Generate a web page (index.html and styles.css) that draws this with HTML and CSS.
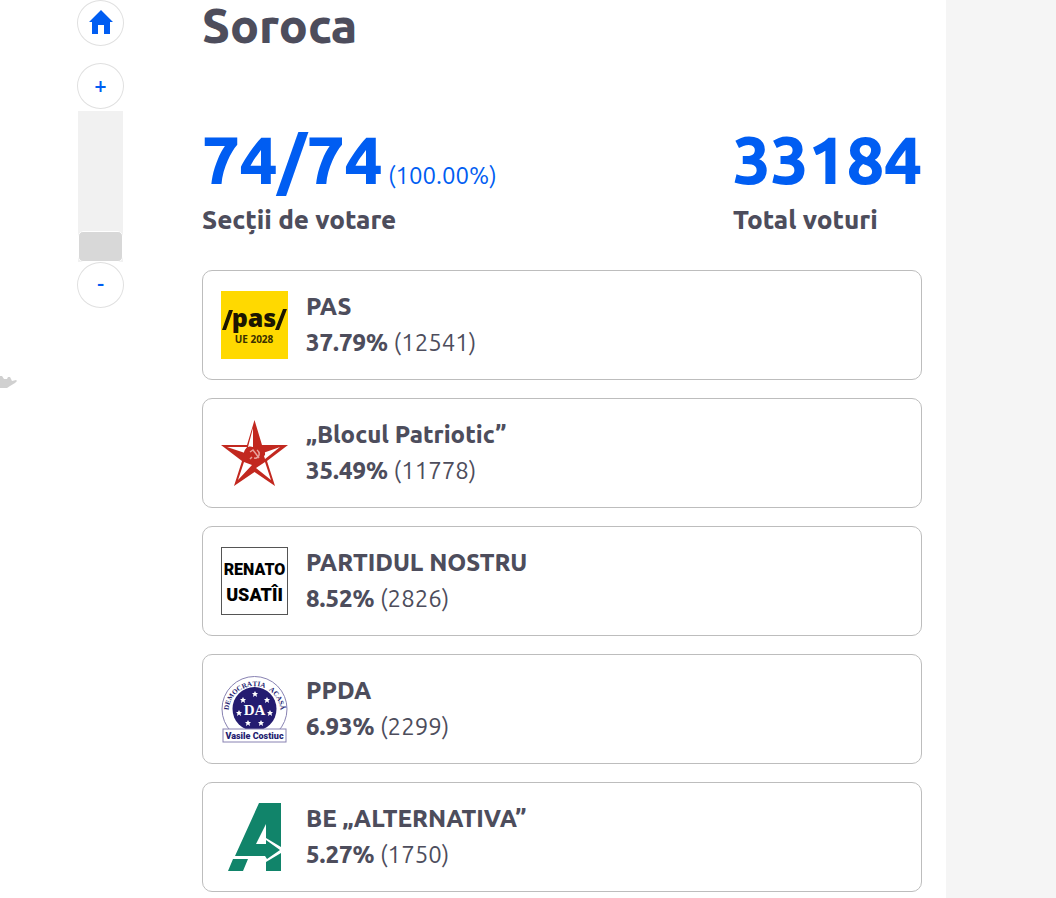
FILE: index.html
```html
<!DOCTYPE html>
<html lang="ro">
	<head>
		<title>Soroca</title>
		<meta charset="UTF-8">
		<meta name="viewport" content="width=device-width, initial-scale=1">
		<link rel="stylesheet" href="styles.css">
	</head>
	<body>
		<div id="page">
			<div id="map">
				<svg class="region" width="18" height="16" viewBox="0 0 18 16">
					<path d="M0 1L2 1L4 4L7 4L8 2L10 2L12 6L16 5L17 6L15 8L10 11L7 13L5 13L0 13Z" fill="#d0d0d0" />
				</svg>
				<div class="controls">
					<button class="round home" type="button" aria-label="Acasă">
						<svg width="24" height="24" viewBox="0 0 24 24">
							<path d="M12 0L0 12H3V24H9V15H15V24H21V12H24Z" fill="#005df2" />
						</svg>
					</button>
					<button class="round" type="button">+</button>
					<input class="zoom" type="range" min="1" max="32" value="1" aria-label="Zoom" />
					<button class="round" type="button">-</button>
				</div>
			</div>
			<div id="panel">
				<h1>Soroca</h1>
				<div class="stats">
					<div class="stat">
						<div><span class="number">74/74</span> <span class="percent">(100.00%)</span></div>
						<div class="label">Secții de votare</div>
					</div>
					<div class="stat">
						<div><span class="number">33184</span></div>
						<div class="label">Total voturi</div>
					</div>
				</div>
				<div class="results">
					<div class="card">
						<svg class="logo" viewBox="0 0 67 68">
							<rect width="67" height="68" fill="#ffd900" />
							<path d="M1 39L8 19H12L5 39ZM54 39L62 18H66L58 39Z" fill="#1c1600" />
							<text class="heavy" x="33" y="36" font-size="25" text-anchor="middle" fill="#1c1600">pas</text>
							<text class="sans" x="33" y="52" font-size="10" text-anchor="middle" fill="#3a3000">UE 2028</text>
						</svg>
						<div>
							<div class="name">PAS</div>
							<div class="votes"><b>37.79%</b> (12541)</div>
						</div>
					</div>
					<div class="card">
						<svg class="logo" viewBox="0 0 67 68">
							<path d="M33.500 1L41 26H67L46 42L54 67L33.500 53L13 67L21 42L0 26H26Z" fill="#c2281f" />
							<path d="M32 9V28L27 28ZM6 28H26L24 34ZM23 43L31 46L17 61ZM35 49L44 43L50 61ZM42 34L59 28L44 40Z" fill="#fff" />
							<path d="M33.500 47L23 36C22 28 31 25 33.500 30C36 25 45 28 44 36Z" fill="#c2281f" />
							<path d="M29 33L32 31L38 39M36 31C40 34 38 40 33 39M31 38L29 40" fill="none" stroke="#e8a39c" stroke-width="1.500" />
						</svg>
						<div>
							<div class="name">„Blocul Patriotic”</div>
							<div class="votes"><b>35.49%</b> (11778)</div>
						</div>
					</div>
					<div class="card">
						<svg class="logo" viewBox="0 0 67 68">
							<rect x="0.500" y="0.500" width="66" height="67" fill="#fff" stroke="#555" />
							<text class="block" x="33.500" y="28" font-size="16" text-anchor="middle">RENATO</text>
							<text class="block" x="33.500" y="54" font-size="18" text-anchor="middle">USATÎI</text>
						</svg>
						<div>
							<div class="name">PARTIDUL NOSTRU</div>
							<div class="votes"><b>8.52%</b> (2826)</div>
						</div>
					</div>
					<div class="card">
						<svg class="logo" viewBox="0 0 67 68">
							<defs>
								<path id="arc" d="M11 50A26 26 0 1 1 56 50" />
								<path id="star" d="M0 -3L1 -1H3L1.500 0.500L2 3L0 1.500L-2 3L-1.500 0.500L-3 -1H-1Z" fill="#fff" />
							</defs>
							<circle cx="33.500" cy="34" r="32.500" fill="#fff" stroke="#8882b2" />
							<circle cx="33.500" cy="34" r="22" fill="#241c70" />
							<text class="serif" font-size="7" text-anchor="middle" fill="#241c70"><textPath href="#arc" startOffset="50%">DEMOCRAȚIA &#160; ACASĂ</textPath></text>
							<text class="serif" x="33.500" y="40" font-size="15" text-anchor="middle" fill="#fff">DA</text>
							<use href="#star" x="34" y="19" />
							<use href="#star" x="22" y="25" />
							<use href="#star" x="46" y="25" />
							<use href="#star" x="18" y="38" />
							<use href="#star" x="49" y="38" />
							<use href="#star" x="27" y="48" />
							<use href="#star" x="40" y="48" />
							<rect x="2" y="54" width="63" height="13" fill="#fff" stroke="#8882b2" />
							<text class="block" x="33.500" y="64" font-size="9" text-anchor="middle" fill="#241c70">Vasile Costiuc</text>
						</svg>
						<div>
							<div class="name">PPDA</div>
							<div class="votes"><b>6.93%</b> (2299)</div>
						</div>
					</div>
					<div class="card">
						<svg class="logo" viewBox="0 0 67 68">
							<path d="M38 0H60V44L45 35V21L35 41H45V37L59 47L46 56L44 53H14ZM12 56H27L22 68H7ZM45 59L60 50V68H45Z" fill="#11846a" />
						</svg>
						<div>
							<div class="name">BE „ALTERNATIVA”</div>
							<div class="votes"><b>5.27%</b> (1750)</div>
						</div>
					</div>
				</div>
			</div>
		</div>
	</body>
</html>
```

FILE: styles.css
```css
* {
	box-sizing: border-box;
}
body {
	margin: 0;
	color: #4d4d5c;
	background: #f5f5f5;
	font-family: Ubuntu, "Noto Sans", sans-serif;
	font-size: 24px;
}
#page {
	display: flex;
	min-height: 100vh;
	margin-right: 110px;
	background: #fff;
}
#map {
	position: relative;
	flex: none;
	width: 202px;
}
.region {
	position: absolute;
	left: 0;
	top: 375px;
}
.controls {
	display: flex;
	flex-direction: column;
	width: 46px;
	margin-left: 77px;
}
.round {
	display: flex;
	align-items: center;
	justify-content: center;
	width: 47px;
	height: 46px;
	padding: 0 0 2px;
	color: #005df2;
	background: #fff;
	border: 1px solid #e0e0e0;
	border-radius: 50%;
	font-family: inherit;
	font-size: 22px;
	line-height: 24px;
	font-weight: 500;
}
.home {
	margin-bottom: 17px;
}
.zoom {
	appearance: none;
	writing-mode: vertical-lr;
	direction: rtl;
	width: 45px;
	height: 151px;
	margin: 2px 1px 0;
	background: #f1f1f1;
}
.zoom::-webkit-slider-thumb {
	appearance: none;
	width: 45px;
	height: 31px;
	background: #d8d8d8;
	border: 1px solid #fff;
	border-radius: 5px;
}
#panel {
	flex: 1;
	padding: 0 24px 0 0;
}
h1 {
	margin: 0;
	font-size: 48px;
	line-height: 50px;
	font-weight: 800;
}
.stats {
	display: flex;
	justify-content: space-between;
	margin: 70px 0 32px;
}
.number {
	font-size: 67px;
	line-height: 80px;
	font-weight: 800;
}
.number, .percent {
	color: #005df2;
}
.label {
	margin-top: 2px;
	font-size: 26px;
	line-height: 36px;
	font-weight: 800;
}
.results {
	display: flex;
	flex-direction: column;
	gap: 18px;
}
.card {
	display: flex;
	align-items: center;
	gap: 18px;
	height: 110px;
	padding: 18px;
	border: 1px solid #bdbdbd;
	border-radius: 10px;
	line-height: 36px;
}
.logo {
	flex: none;
	width: 67px;
	height: 68px;
}
.name, .votes b {
	font-weight: 800;
}
.sans {
	font-family: "Noto Sans", sans-serif;
	font-weight: 700;
}
.heavy {
	font-family: "Noto Sans", sans-serif;
	font-weight: 900;
}
.block {
	font-family: Roboto, sans-serif;
	font-weight: 900;
}
.serif {
	font-family: "Liberation Serif", serif;
	font-weight: 700;
}
```
